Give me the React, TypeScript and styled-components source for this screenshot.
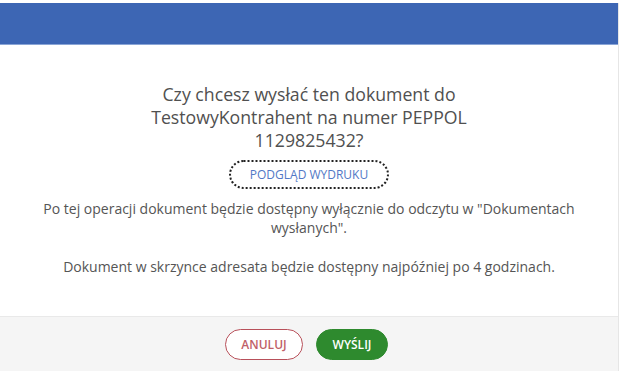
import React from "react";
import styled, { createGlobalStyle } from "styled-components";

const GlobalStyle = createGlobalStyle`
  html, body {
    margin: 0;
    padding: 0;
    background: #ffffff;
  }
  body {
    font-family: "Open Sans", "Noto Sans", sans-serif;
  }
`;

const Dialog = styled.div`
  margin-top: 3px;
  width: 618px;
  height: 368px;
  display: flex;
  flex-direction: column;
  background: #ffffff;
  border-right: 1px solid #e6e6e6;
`;

const Header = styled.div`
  height: 41px;
  background: #3d66b4;
  border-bottom: 1px solid #8aa5d6;
  flex-shrink: 0;
`;

const Body = styled.div`
  flex: 1;
  display: flex;
  flex-direction: column;
  align-items: center;
  padding: 38px 20px 0;
  text-align: center;
`;

const Question = styled.h2`
  margin: 0;
  width: 330px;
  font-size: 17.7px;
  line-height: 23px;
  font-weight: 400;
  color: #505050;
`;

const PreviewButton = styled.button`
  margin-top: 8px;
  width: 160px;
  height: 29px;
  border: 2px dotted #222;
  border-radius: 15px;
  background: #fff;
  color: #5278c6;
  font-family: inherit;
  font-size: 12px;
  text-transform: uppercase;
  cursor: pointer;
`;

const Note = styled.p<{ $gap?: number }>`
  margin: ${(p) => p.$gap ?? 0}px 0 0;
  font-size: 14px;
  line-height: 19px;
  color: #555555;
`;

const Footer = styled.div`
  height: 54px;
  flex-shrink: 0;
  display: flex;
  justify-content: center;
  align-items: center;
  gap: 13px;
  padding-right: 5px;
  background: #f5f5f5;
  border-top: 1px solid #e9e9e9;
`;

const Action = styled.button<{ $primary?: boolean }>`
  height: 31px;
  padding: 0;
  border-radius: 16px;
  font-family: inherit;
  font-size: 12px;
  font-weight: 600;
  text-transform: uppercase;
  cursor: pointer;
  border: 1px solid ${(p) => (p.$primary ? "#2e8a2e" : "#b8505a")};
  background: ${(p) => (p.$primary ? "#2e8a2e" : "#ffffff")};
  color: ${(p) => (p.$primary ? "#ffffff" : "#bf5f68")};
  width: ${(p) => (p.$primary ? 72 : 78)}px;
`;

const App: React.FC = () => {
  return (
    <>
      <GlobalStyle />
      <Dialog>
        <Header />
        <Body>
          <Question>
            Czy chcesz wysłać ten dokument do TestowyKontrahent na numer PEPPOL
            1129825432?
          </Question>
          <PreviewButton>Podgląd wydruku</PreviewButton>
          <Note $gap={10}>
            Po tej operacji dokument będzie dostępny wyłącznie do odczytu w
            "Dokumentach wysłanych".
          </Note>
          <Note $gap={20}>
            Dokument w skrzynce adresata będzie dostępny najpóźniej po 4
            godzinach.
          </Note>
        </Body>
        <Footer>
          <Action>Anuluj</Action>
          <Action $primary>Wyślij</Action>
        </Footer>
      </Dialog>
    </>
  );
};

export default App;
